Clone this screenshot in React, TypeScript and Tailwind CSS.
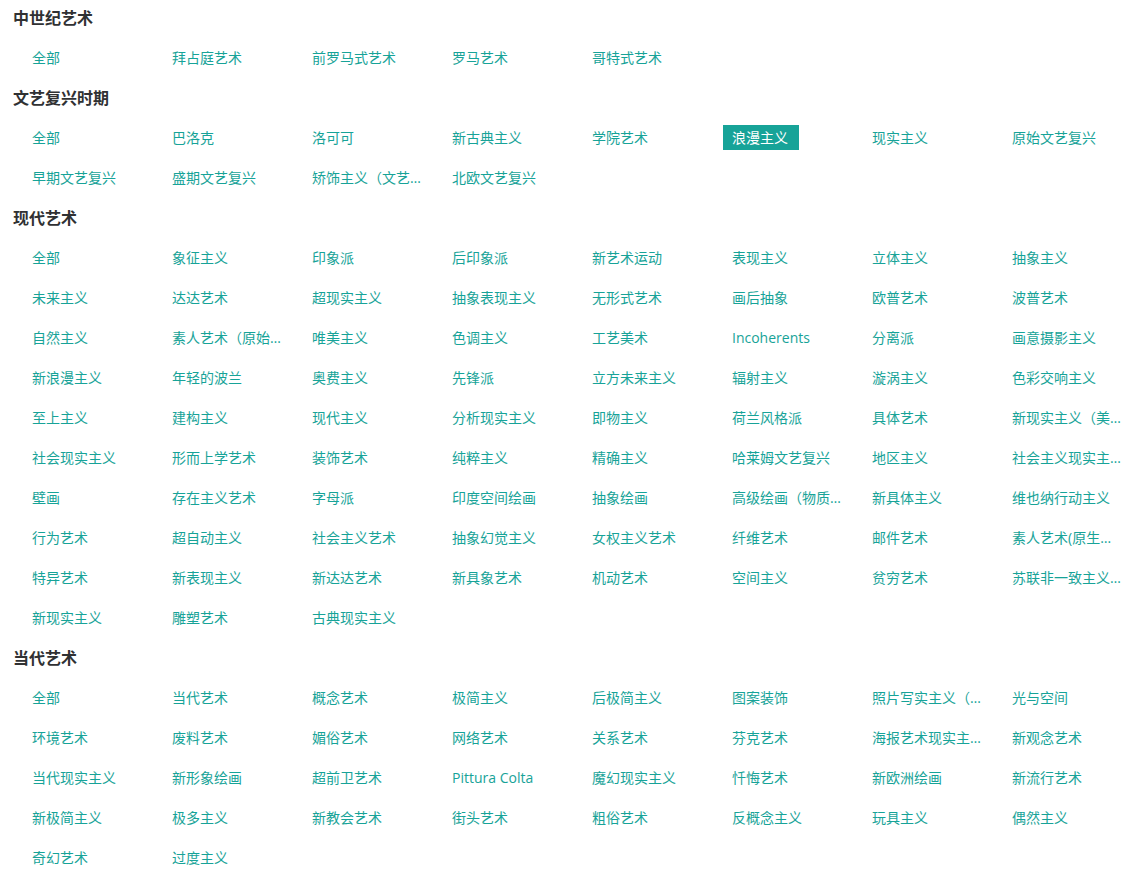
import React from "react";

type Section = { title: string; items: string[] };

const sections: Section[] = [
  {
    title: "中世纪艺术",
    items: ["全部", "拜占庭艺术", "前罗马式艺术", "罗马艺术", "哥特式艺术"],
  },
  {
    title: "文艺复兴时期",
    items: [
      "全部", "巴洛克", "洛可可", "新古典主义", "学院艺术", "浪漫主义", "现实主义", "原始文艺复兴",
      "早期文艺复兴", "盛期文艺复兴", "矫饰主义（文艺复兴晚期）", "北欧文艺复兴",
    ],
  },
  {
    title: "现代艺术",
    items: [
      "全部", "象征主义", "印象派", "后印象派", "新艺术运动", "表现主义", "立体主义", "抽象主义",
      "未来主义", "达达艺术", "超现实主义", "抽象表现主义", "无形式艺术", "画后抽象", "欧普艺术", "波普艺术",
      "自然主义", "素人艺术（原始主义）", "唯美主义", "色调主义", "工艺美术", "Incoherents", "分离派", "画意摄影主义",
      "新浪漫主义", "年轻的波兰", "奥费主义", "先锋派", "立方未来主义", "辐射主义", "漩涡主义", "色彩交响主义",
      "至上主义", "建构主义", "现代主义", "分析现实主义", "即物主义", "荷兰风格派", "具体艺术", "新现实主义（美国）",
      "社会现实主义", "形而上学艺术", "装饰艺术", "纯粹主义", "精确主义", "哈莱姆文艺复兴", "地区主义", "社会主义现实主义",
      "壁画", "存在主义艺术", "字母派", "印度空间绘画", "抽象绘画", "高级绘画（物质绘画）", "新具体主义", "维也纳行动主义",
      "行为艺术", "超自动主义", "社会主义艺术", "抽象幻觉主义", "女权主义艺术", "纤维艺术", "邮件艺术", "素人艺术(原生艺术)",
      "特异艺术", "新表现主义", "新达达艺术", "新具象艺术", "机动艺术", "空间主义", "贫穷艺术", "苏联非一致主义艺术",
      "新现实主义", "雕塑艺术", "古典现实主义",
    ],
  },
  {
    title: "当代艺术",
    items: [
      "全部", "当代艺术", "概念艺术", "极简主义", "后极简主义", "图案装饰", "照片写实主义（超级写实主义）", "光与空间",
      "环境艺术", "废料艺术", "媚俗艺术", "网络艺术", "关系艺术", "芬克艺术", "海报艺术现实主义", "新观念艺术",
      "当代现实主义", "新形象绘画", "超前卫艺术", "Pittura Colta", "魔幻现实主义", "忏悔艺术", "新欧洲绘画", "新流行艺术",
      "新极简主义", "极多主义", "新教会艺术", "街头艺术", "粗俗艺术", "反概念主义", "玩具主义", "偶然主义",
      "奇幻艺术", "过度主义",
    ],
  },
];

export default function App() {
  return (
    <div
      className="w-[1136px] min-h-[877px] bg-white"
      style={{ fontFamily: '"Open Sans", "Noto Sans CJK SC", sans-serif' }}
    >
      {sections.map((s) => (
        <div key={s.title}>
          <div className="h-10 pl-[13px] pt-[6px] text-[16px] leading-[24px] font-semibold text-[#303133]">
            {s.title}
          </div>
          <div className="grid grid-cols-[repeat(8,140px)] pl-[23px]">
            {s.items.map((it, i) => {
              const active = s.title === "文艺复兴时期" && it === "浪漫主义";
              return (
                <div key={i} className="h-10 pt-[5px]">
                  <span
                    className={
                      "inline-block max-w-[130px] truncate pl-[9px] pr-[11px] text-[14px] leading-[25px] cursor-pointer align-top " +
                      (active ? "bg-[#17a398] text-white" : "text-[#17a398]")
                    }
                  >
                    {it}
                  </span>
                </div>
              );
            })}
          </div>
        </div>
      ))}
    </div>
  );
}
